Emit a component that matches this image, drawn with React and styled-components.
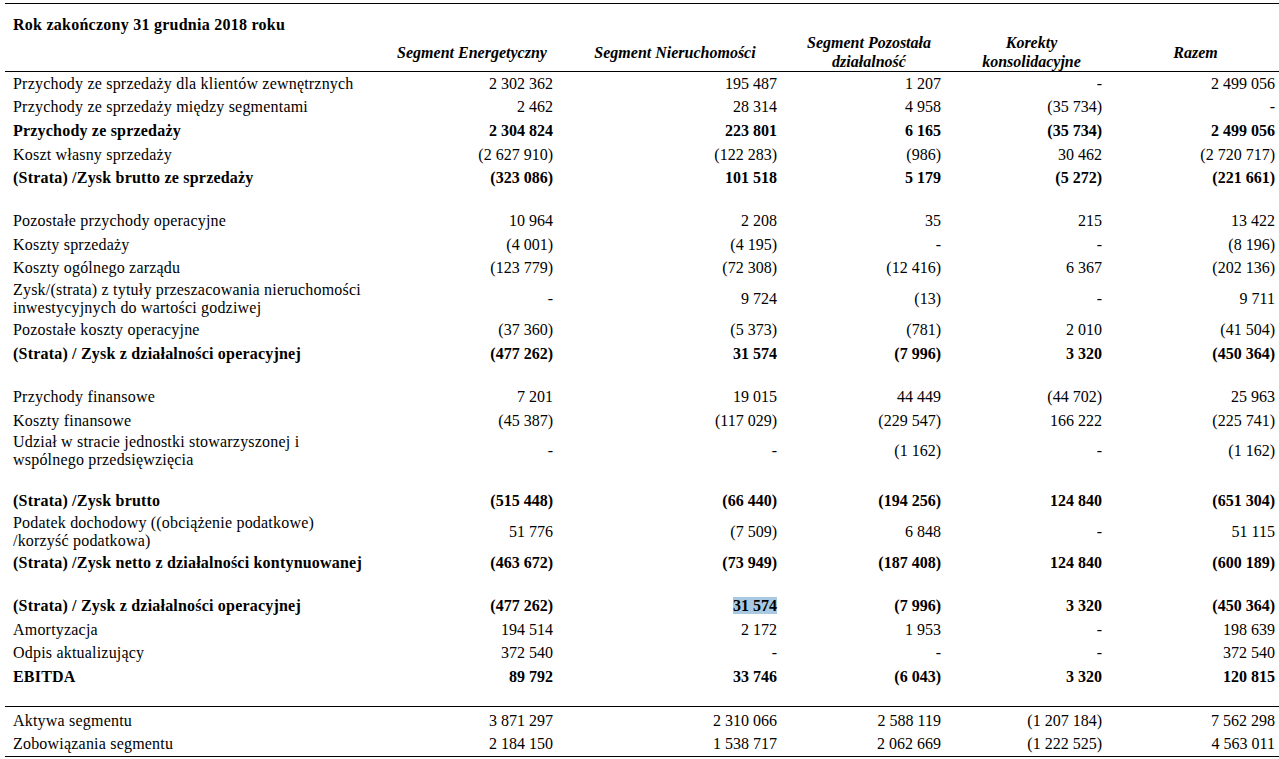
import React from 'react';
import styled, { createGlobalStyle } from 'styled-components';

const GlobalStyle = createGlobalStyle`
  html, body {
    margin: 0;
    padding: 0;
    background: #fff;
  }
  body {
    font-family: "Liberation Serif", "Times New Roman", serif;
    color: #000;
  }
`;

const COLS = '370px 182px 224px 164px 161px 173px';

const Page = styled.div`
  padding: 3px 0 0 5px;
  width: 1274px;
`;

const Table = styled.div`
  border-top: 1px solid #000;
  border-bottom: 1px solid #000;
  font-size: 16px;
`;

const TitleRow = styled.div`
  height: 32px;
  padding: 12px 0 0 8px;
  box-sizing: border-box;
  line-height: 18px;
  font-weight: bold;
  letter-spacing: 0.25px;
`;

const HeadRow = styled.div`
  display: grid;
  grid-template-columns: ${COLS};
  height: 35px;
  align-items: center;
  border-bottom: 1px solid #000;
`;

const HeadCell = styled.div`
  text-align: center;
  padding-left: 12px;
  padding-right: ${p => p.$trim || 0}px;
  font-weight: bold;
  font-style: italic;
  line-height: 19px;
  margin-top: -3px;
`;

const Row = styled.div`
  display: grid;
  grid-template-columns: ${COLS};
  align-items: center;
  height: ${p => (p.$double ? '38.2px' : '23.6px')};
  line-height: ${p => (p.$double ? '18.5px' : '18px')};
  font-weight: ${p => (p.$bold ? 'bold' : 'normal')};
`;

const Spacer = styled.div`
  height: ${p => p.$h}px;
`;

const Rule = styled.div`
  border-top: 1px solid #000;
  margin-bottom: 2px;
`;

const Label = styled.div`
  padding-left: 8px;
  white-space: nowrap;
  letter-spacing: 0.2px;
`;

const Num = styled.div`
  text-align: right;
  padding-right: 4px;
  white-space: nowrap;
`;

const Selected = styled.span`
  background: #a9c9e3;
`;

const headers = [
  ['Segment Energetyczny'],
  ['Segment Nieruchomości'],
  ['Segment Pozostała', 'działalność'],
  ['Korekty', 'konsolidacyjne'],
  ['Razem'],
];

const rows = [
  { label: ['Przychody ze sprzedaży dla klientów zewnętrznych'], v: ['2 302 362', '195 487', '1 207', '-', '2 499 056'] },
  { label: ['Przychody ze sprzedaży między segmentami'], v: ['2 462', '28 314', '4 958', '(35 734)', '-'] },
  { label: ['Przychody ze sprzedaży'], bold: true, v: ['2 304 824', '223 801', '6 165', '(35 734)', '2 499 056'] },
  { label: ['Koszt własny sprzedaży'], v: ['(2 627 910)', '(122 283)', '(986)', '30 462', '(2 720 717)'] },
  { label: ['(Strata) /Zysk brutto ze sprzedaży'], bold: true, v: ['(323 086)', '101 518', '5 179', '(5 272)', '(221 661)'] },
  { gap: 19.5 },
  { label: ['Pozostałe przychody operacyjne'], v: ['10 964', '2 208', '35', '215', '13 422'] },
  { label: ['Koszty sprzedaży'], v: ['(4 001)', '(4 195)', '-', '-', '(8 196)'] },
  { label: ['Koszty ogólnego zarządu'], v: ['(123 779)', '(72 308)', '(12 416)', '6 367', '(202 136)'] },
  { label: ['Zysk/(strata) z tytuły przeszacowania nieruchomości', 'inwestycyjnych do wartości godziwej'], v: ['-', '9 724', '(13)', '-', '9 711'] },
  { label: ['Pozostałe koszty operacyjne'], v: ['(37 360)', '(5 373)', '(781)', '2 010', '(41 504)'] },
  { label: ['(Strata) / Zysk z działalności operacyjnej'], bold: true, v: ['(477 262)', '31 574', '(7 996)', '3 320', '(450 364)'] },
  { gap: 19.5 },
  { label: ['Przychody finansowe'], v: ['7 201', '19 015', '44 449', '(44 702)', '25 963'] },
  { label: ['Koszty finansowe'], v: ['(45 387)', '(117 029)', '(229 547)', '166 222', '(225 741)'] },
  { label: ['Udział w stracie jednostki stowarzyszonej i', 'wspólnego przedsięwzięcia'], v: ['-', '-', '(1 162)', '-', '(1 162)'] },
  { gap: 19 },
  { label: ['(Strata) /Zysk brutto'], bold: true, v: ['(515 448)', '(66 440)', '(194 256)', '124 840', '(651 304)'] },
  { label: ['Podatek dochodowy ((obciążenie podatkowe)', '/korzyść podatkowa)'], v: ['51 776', '(7 509)', '6 848', '-', '51 115'] },
  { label: ['(Strata) /Zysk netto z działalności kontynuowanej'], bold: true, v: ['(463 672)', '(73 949)', '(187 408)', '124 840', '(600 189)'] },
  { gap: 19.5 },
  { label: ['(Strata) / Zysk z działalności operacyjnej'], bold: true, v: ['(477 262)', '31 574', '(7 996)', '3 320', '(450 364)'], selected: 1 },
  { label: ['Amortyzacja'], v: ['194 514', '2 172', '1 953', '-', '198 639'] },
  { label: ['Odpis aktualizujący'], v: ['372 540', '-', '-', '-', '372 540'] },
  { label: ['EBITDA'], bold: true, v: ['89 792', '33 746', '(6 043)', '3 320', '120 815'] },
  { gap: 17 },
  { rule: true },
  { label: ['Aktywa segmentu'], v: ['3 871 297', '2 310 066', '2 588 119', '(1 207 184)', '7 562 298'] },
  { label: ['Zobowiązania segmentu'], v: ['2 184 150', '1 538 717', '2 062 669', '(1 222 525)', '4 563 011'] },
];

const Lines = ({ parts }) =>
  parts.map((p, i) => (
    <React.Fragment key={i}>
      {i > 0 && <br />}
      {p}
    </React.Fragment>
  ));

const App = () => (
  <>
    <GlobalStyle />
    <Page>
      <Table>
        <TitleRow>Rok zakończony 31 grudnia 2018 roku</TitleRow>
        <HeadRow>
          <div />
          {headers.map((h, i) => (
            <HeadCell key={i} $trim={i === headers.length - 1 ? 6 : 0}>
              <Lines parts={h} />
            </HeadCell>
          ))}
        </HeadRow>

        {rows.map((r, i) => {
          if (r.gap) return <Spacer key={i} $h={r.gap} />;
          if (r.rule) return <Rule key={i} />;
          return (
            <Row key={i} $bold={r.bold} $double={r.label.length > 1}>
              <Label>
                <Lines parts={r.label} />
              </Label>
              {r.v.map((val, j) => (
                <Num key={j}>{r.selected === j ? <Selected>{val}</Selected> : val}</Num>
              ))}
            </Row>
          );
        })}
      </Table>
    </Page>
  </>
);

export default App;
